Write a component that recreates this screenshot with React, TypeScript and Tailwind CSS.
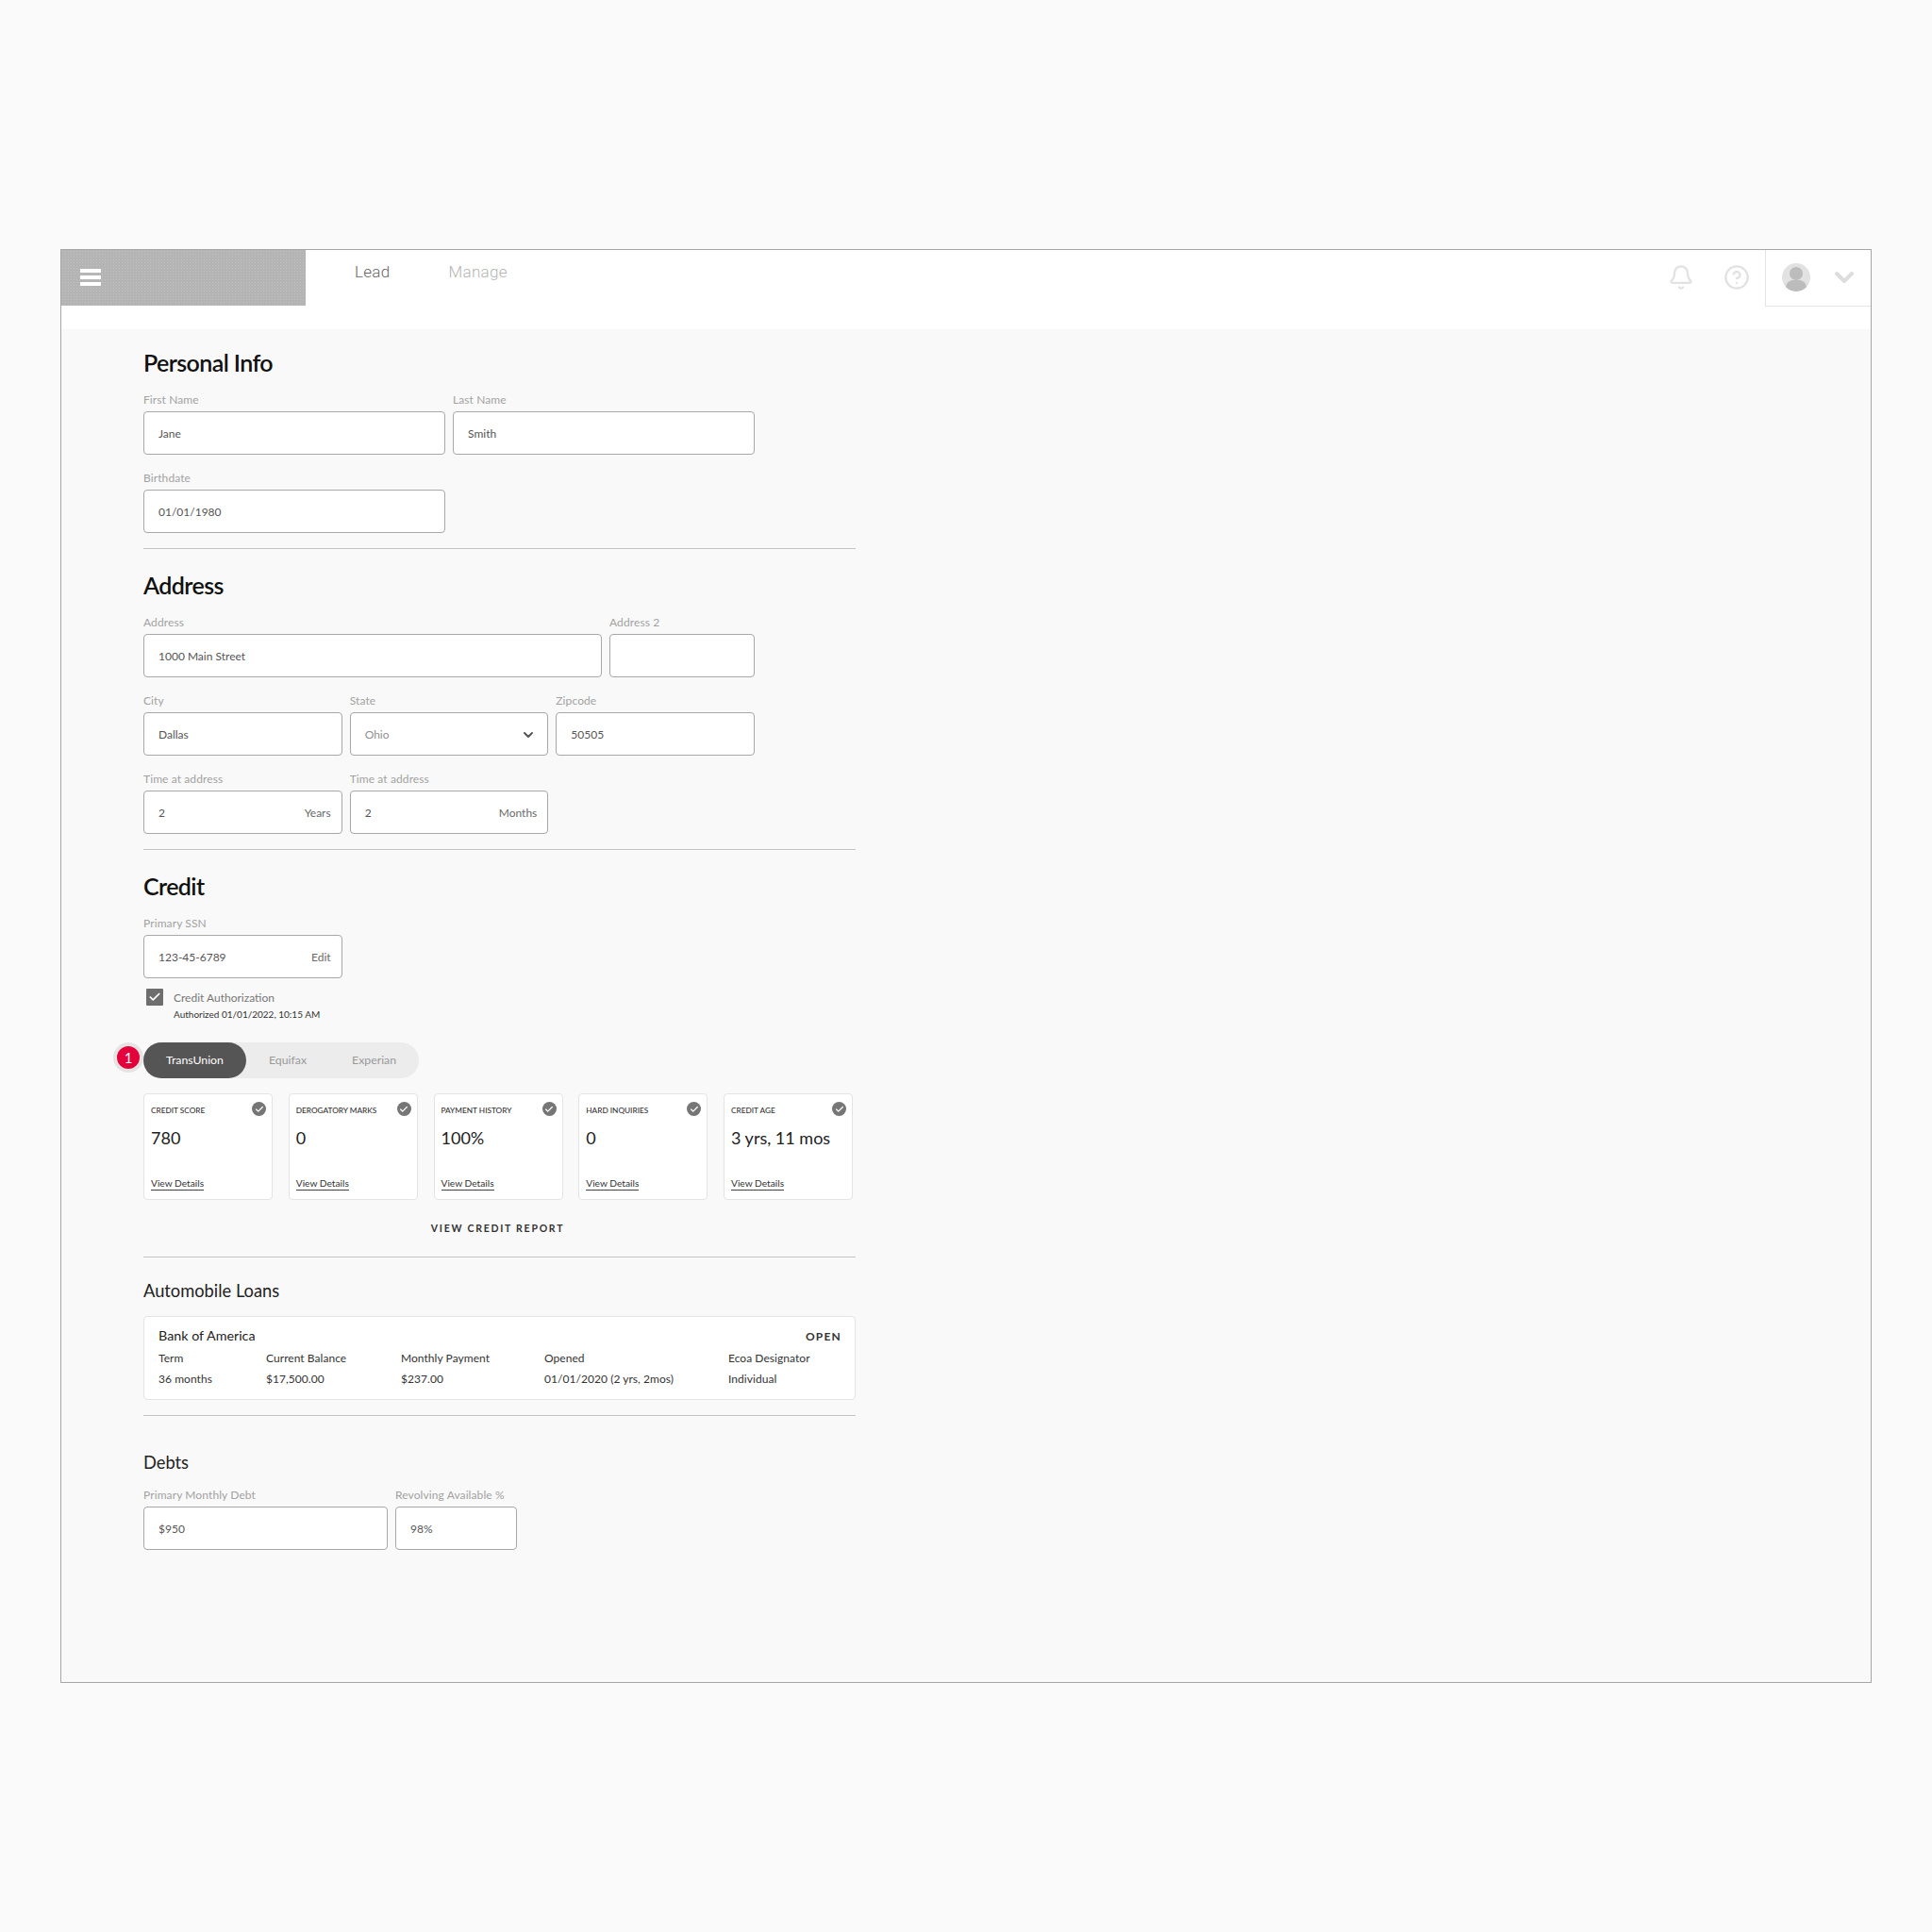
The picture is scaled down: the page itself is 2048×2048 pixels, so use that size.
import { Bell, Check, ChevronDown, CircleHelp } from 'lucide-react';
import type { ReactNode } from 'react';

const Field = ({
  label,
  value,
  width,
  suffix,
  muted,
  children,
}: {
  label: string;
  value?: string;
  width: string;
  suffix?: string;
  muted?: boolean;
  children?: ReactNode;
}) => (
  <div className={`flex flex-col ${width}`}>
    <label className="h-[20px] text-[12px] leading-[16px] tracking-[0.1px] text-[#a2a2a2]">{label}</label>
    <div className="flex h-[46px] items-center justify-between rounded-[4px] border border-[#a8a8a8] bg-white pl-[15px] pr-[11px] pt-[1px] text-[12px]">
      <span className={muted ? 'text-[#8f8f8f]' : 'text-[#555555]'}>{value}</span>
      {suffix && <span className="text-[#6a6a6a]">{suffix}</span>}
      {children}
    </div>
  </div>
);

const Divider = () => <div className="h-px w-[755px] bg-[#c4c4c4]" />;

const SectionTitle = ({ children }: { children: ReactNode }) => (
  <h2 className="text-[25px] font-semibold leading-[30px] tracking-[-0.6px] text-[#111111]">{children}</h2>
);

const SubTitle = ({ children }: { children: ReactNode }) => (
  <h3 className="text-[18.3px] leading-[24px] text-[#222222]">{children}</h3>
);

const metrics = [
  { title: 'CREDIT SCORE', value: '780' },
  { title: 'DEROGATORY MARKS', value: '0' },
  { title: 'PAYMENT HISTORY', value: '100%' },
  { title: 'HARD INQUIRIES', value: '0' },
  { title: 'CREDIT AGE', value: '3 yrs, 11 mos' },
];

const MetricCard = ({ title, value }: { title: string; value: string }) => (
  <div className="relative flex h-[113px] w-[137px] flex-col rounded-[4px] border border-[#e4e4e4] bg-white pl-[7px] pt-[10px]">
    <span className="text-[8.25px] font-medium leading-[14px] text-[#333333]">{title}</span>
    <span className="mt-[8px] text-[18px] leading-[28px] text-[#222222]">{value}</span>
    <span className="mt-[28px] w-fit border-b border-[#444444] text-[10.2px] leading-[13px] text-[#333333]">View Details</span>
    <span className="absolute right-[6px] top-[8px] flex h-[15px] w-[15px] items-center justify-center rounded-full bg-[#767676]">
      <Check className="h-[10px] w-[10px] text-white" strokeWidth={3} />
    </span>
  </div>
);

const loanColumns = [
  { head: 'Term', value: '36 months', width: 'w-[114px]' },
  { head: 'Current Balance', value: '$17,500.00', width: 'w-[143px]' },
  { head: 'Monthly Payment', value: '$237.00', width: 'w-[152px]' },
  { head: 'Opened', value: '01/01/2020 (2 yrs, 2mos)', width: 'w-[195px]' },
  { head: 'Ecoa Designator', value: 'Individual', width: 'w-[110px]' },
];

export default function App() {
  return (
    <div className="min-h-[2048px] bg-[#fafafa] pl-[64px] pt-[264px] font-['Lato',sans-serif]">
      <div className="flex h-[1520px] w-[1920px] flex-col border border-[#a6a6a6] bg-white">
        <header className="flex h-[84px] shrink-0 items-start">
          <div className="flex h-[59px] w-[259px] items-center bg-[#b4b4b4] bg-[radial-gradient(circle,#c0c0c0_0.6px,transparent_0.8px)] bg-[length:3px_3px] pb-[2px] pl-[20px]">
            <div className="flex w-[22px] flex-col gap-[3px]">
              <span className="h-[4px] bg-white" />
              <span className="h-[4px] bg-white" />
              <span className="h-[4px] bg-white" />
            </div>
          </div>
          <nav className="ml-[52px] flex gap-[62px] pt-[11px] font-['Roboto',sans-serif] text-[17px] font-light leading-[24px] tracking-[0.3px]">
            <span className="text-[#666666]">Lead</span>
            <span className="text-[#b4b4b4]">Manage</span>
          </nav>
          <div className="ml-auto flex items-start">
            <div className="flex h-[58px] items-center gap-[31px] pr-[16px]">
              <Bell className="h-[28px] w-[28px] text-[#e2e2e2]" strokeWidth={2} />
              <CircleHelp className="h-[28px] w-[28px] text-[#e2e2e2]" strokeWidth={2} />
            </div>
            <div className="flex h-[60px] w-[112px] items-center border-b border-l border-[#e4e4e4] pb-[1px] pl-[17px]">
              <span className="relative h-[30px] w-[30px] shrink-0 overflow-hidden rounded-full bg-[#e2e2e2]">
                <span className="absolute left-[8px] top-[4px] h-[14px] w-[14px] rounded-full bg-[#bcbcbc]" />
                <span className="absolute left-[4px] top-[18px] h-[16px] w-[22px] rounded-full bg-[#bcbcbc]" />
              </span>
              <ChevronDown className="ml-[20px] h-[32px] w-[32px] shrink-0 text-[#dddddd]" strokeWidth={3} />
            </div>
          </div>
        </header>

        <main className="flex flex-1 flex-col items-start bg-[#f9f9f9] pl-[87px] pt-[20px]">
          <SectionTitle>Personal Info</SectionTitle>
          <div className="mt-[17px] flex gap-[8px]">
            <Field label="First Name" value="Jane" width="w-[320px]" />
            <Field label="Last Name" value="Smith" width="w-[320px]" />
          </div>
          <div className="mt-[17px]">
            <Field label="Birthdate" value="01/01/1980" width="w-[320px]" />
          </div>
          <div className="mt-[16px]">
            <Divider />
          </div>

          <div className="mt-[23px]">
            <SectionTitle>Address</SectionTitle>
          </div>
          <div className="mt-[17px] flex gap-[8px]">
            <Field label="Address" value="1000 Main Street" width="w-[486px]" />
            <Field label="Address 2" value="" width="w-[154px]" />
          </div>
          <div className="mt-[17px] flex gap-[8px]">
            <Field label="City" value="Dallas" width="w-[210.67px]" />
            <Field label="State" value="Ohio" width="w-[210.67px]" muted>
              <ChevronDown className="mr-[1px] h-[16px] w-[16px] text-[#555555]" strokeWidth={3} />
            </Field>
            <Field label="Zipcode" value="50505" width="w-[210.67px]" />
          </div>
          <div className="mt-[17px] flex gap-[8px]">
            <Field label="Time at address" value="2" suffix="Years" width="w-[210.67px]" />
            <Field label="Time at address" value="2" suffix="Months" width="w-[210.67px]" />
          </div>
          <div className="mt-[16px]">
            <Divider />
          </div>

          <div className="mt-[23px]">
            <SectionTitle>Credit</SectionTitle>
          </div>
          <div className="mt-[17px]">
            <Field label="Primary SSN" value="123-45-6789" suffix="Edit" width="w-[210.67px]" />
          </div>

          <div className="ml-[3px] mt-[12px] flex gap-[11px]">
            <span className="-mt-[1px] flex h-[18px] w-[18px] items-center justify-center rounded-[1px] bg-[#6e6e6e]">
              <Check className="h-[14px] w-[14px] text-white" strokeWidth={3} />
            </span>
            <div className="flex flex-col">
              <span className="text-[12px] leading-[18px] text-[#777777]">Credit Authorization</span>
              <span className="text-[10px] leading-[16px] text-[#333333]">Authorized 01/01/2022, 10:15 AM</span>
            </div>
          </div>

          <div className="relative mt-[22px] flex h-[38px] w-[292px] items-center rounded-full bg-[#ececec] text-[12.3px]">
            <span className="absolute -left-[32px] top-[0px] flex h-[32px] w-[32px] items-center justify-center rounded-full border-[4px] border-[#e4e4e4] bg-[#e4003a] text-[15px] text-white">
              1
            </span>
            <span className="flex h-[38px] w-[109px] items-center justify-center rounded-full bg-[#555555] text-white">TransUnion</span>
            <span className="ml-[24px] text-[#999999]">Equifax</span>
            <span className="ml-[48px] text-[#999999]">Experian</span>
          </div>

          <div className="mt-[16px] flex gap-[16.75px]">
            {metrics.map((m) => (
              <MetricCard key={m.title} title={m.title} value={m.value} />
            ))}
          </div>

          <div className="mt-[22px] w-[751px] text-center text-[10.5px] font-bold leading-[16px] tracking-[1.75px] text-[#333333]">
            VIEW CREDIT REPORT
          </div>
          <div className="mt-[22px]">
            <Divider />
          </div>

          <div className="mt-[23px]">
            <SubTitle>Automobile Loans</SubTitle>
          </div>
          <div className="mt-[15px] h-[89px] w-[755px] rounded-[4px] border border-[#e4e4e4] bg-white pl-[15px] pr-[14px] pt-[10px]">
            <div className="flex items-start justify-between">
              <span className="text-[14.3px] leading-[20px] text-[#222222]">Bank of America</span>
              <span className="mt-[1px] text-[12px] font-bold leading-[20px] tracking-[1.2px] text-[#333333]">OPEN</span>
            </div>
            <div className="mt-[4px] flex">
              {loanColumns.map((c) => (
                <div key={c.head} className={`flex flex-col gap-[4px] text-[12px] leading-[18px] tracking-[0.05px] text-[#333333] ${c.width}`}>
                  <span>{c.head}</span>
                  <span>{c.value}</span>
                </div>
              ))}
            </div>
          </div>
          <div className="mt-[16px]">
            <Divider />
          </div>

          <div className="mt-[37px]">
            <SubTitle>Debts</SubTitle>
          </div>
          <div className="mt-[15px] flex gap-[8px]">
            <Field label="Primary Monthly Debt" value="$950" width="w-[259px]" />
            <Field label="Revolving Available %" value="98%" width="w-[129px]" />
          </div>
        </main>
      </div>
    </div>
  );
}
